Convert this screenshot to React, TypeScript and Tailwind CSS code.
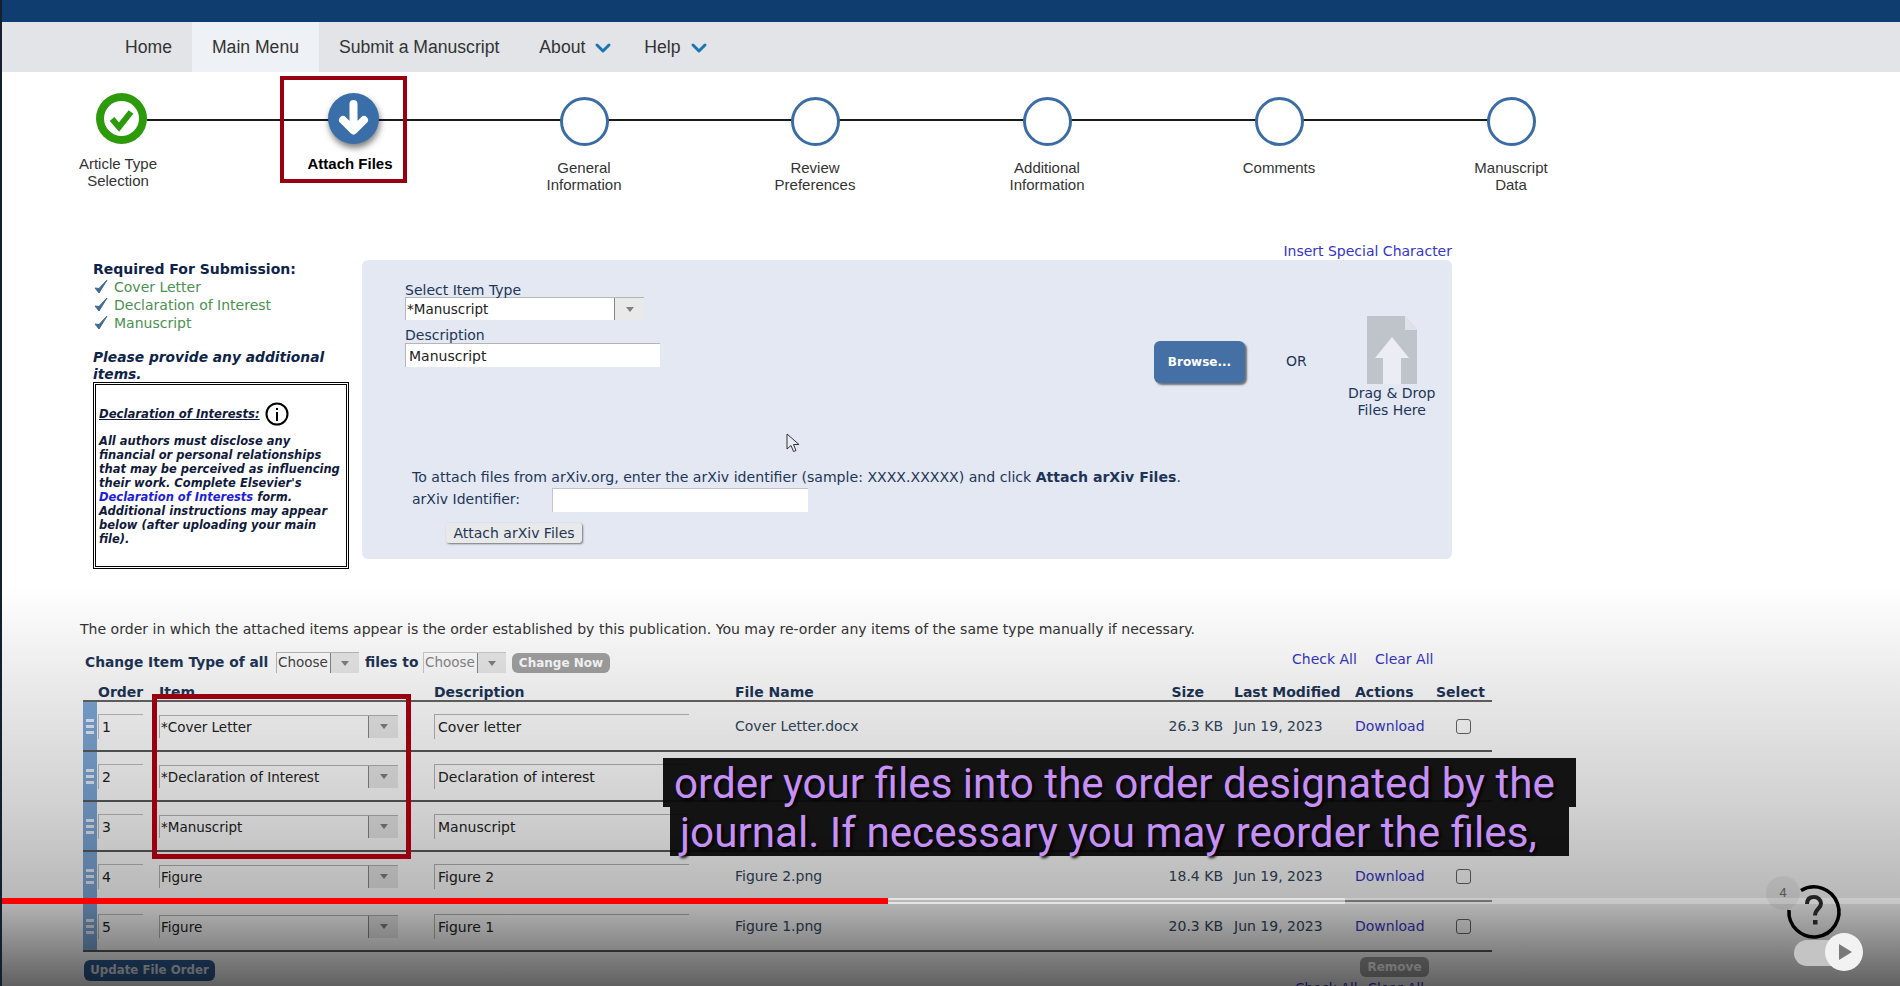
import { ChevronDown } from 'lucide-react';

type StepProps = {
    label: string[];
    state: 'done' | 'active' | 'todo';
    className: string;
    labelClass?: string;
};

// rows 2 and 3 sit behind the caption, their file columns can't be read
const rows = [
    { n: 1, item: '*Cover Letter', desc: 'Cover letter', file: 'Cover Letter.docx', size: '26.3 KB' },
    { n: 2, item: '*Declaration of Interest', desc: 'Declaration of interest', file: '', size: '' },
    { n: 3, item: '*Manuscript', desc: 'Manuscript', file: '', size: '' },
    { n: 4, item: 'Figure', desc: 'Figure 2', file: 'Figure 2.png', size: '18.4 KB' },
    { n: 5, item: 'Figure', desc: 'Figure 1', file: 'Figure 1.png', size: '20.3 KB' },
];

const gridCols = 'grid grid-cols-[15px_61px_275px_301px_405px_94px_121px_81px_56px]';

function Step({ label, state, className, labelClass }: StepProps) {
    return (
        <div className={`relative flex flex-col items-center font-['Liberation_Sans',sans-serif] text-[15px] leading-[17px] text-[#333] ${className}`}>
            {state === 'done' && (
                <svg width="51" height="51" viewBox="0 0 51 51" className="mt-[21px] mb-[11px]">
                    <circle cx="25.5" cy="25.5" r="25.5" fill="#2d9a0c" />
                    <circle cx="25.5" cy="25.5" r="17.5" fill="#fff" />
                    <path d="M16 26l7 8 12-15" fill="none" stroke="#2d9a0c" strokeWidth="6" />
                </svg>
            )}
            {state === 'active' && (
                <div className="mt-[21px] mb-[11px] h-[51px] w-[51px] rounded-full bg-[#3a6ea8] shadow-[1px_4px_6px_rgba(0,0,0,0.5)]">
                    <svg width="51" height="51" viewBox="0 0 51 51">
                        <path d="M25.5 11v24M15 27l10.500 10.500L36 27" fill="none" stroke="#fff" strokeWidth="8" strokeLinecap="round" strokeLinejoin="round" />
                    </svg>
                </div>
            )}
            {state === 'todo' && (
                <div className="mt-[25px] mb-[13px] h-[49px] w-[49px] rounded-full border-[3px] border-[#3b6da3] bg-white" />
            )}
            <div className={`text-center whitespace-nowrap ${state === 'active' ? 'font-bold text-black' : ''} ${labelClass ?? ''}`}>
                {label.map((l) => (
                    <div key={l}>{l}</div>
                ))}
            </div>
        </div>
    );
}

function Arrow({ className }: { className: string }) {
    return (
        <div className={`flex items-center justify-center bg-[#e9e9e9] border-l border-[#888] ${className}`}>
            <div className="h-0 w-0 border-x-[4px] border-t-[5px] border-x-transparent border-t-[#808080]" />
        </div>
    );
}

function Select({ text, w, arrow }: { text: string; w: string; arrow: string }) {
    return (
        <div className={`flex h-[23px] bg-white border-t border-l border-[#b5b5b5] ${w}`}>
            <div className="flex-1 pl-[1px] text-[13.5px] leading-[22px] text-[#222] whitespace-nowrap overflow-hidden">{text}</div>
            <Arrow className={arrow} />
        </div>
    );
}

function Grip() {
    return (
        <div className="flex w-[14px] flex-col items-center justify-center gap-[3px] self-stretch bg-[#7da8d8]">
            <div className="h-[3px] w-[8px] bg-[#e6edf5]" />
            <div className="h-[3px] w-[8px] bg-[#e6edf5]" />
            <div className="h-[3px] w-[8px] bg-[#e6edf5]" />
        </div>
    );
}

export default function App() {
    return (
        <div className="relative h-[986px] w-[1900px] overflow-hidden border-l-2 border-[#14202e] bg-white font-['DejaVu_Sans',sans-serif] text-[#1d3557]">
            {/* Top bar and menu */}
            <div className="h-[22px] bg-[#0f3d70]" />
            <div className="flex h-[50px] items-stretch bg-[#e2e4e8] pl-[103px] pt-[1px] font-['Liberation_Sans',sans-serif] text-[17.6px] text-[#333]">
                <div className="flex items-center px-5">Home</div>
                <div className="-mt-[1px] flex items-center bg-[#eef1f5] px-5 pt-[1px]">Main Menu</div>
                <div className="flex items-center px-5">Submit a Manuscript</div>
                <div className="flex items-center gap-[6px] pl-5 pr-[9px]">
                    About <ChevronDown className="h-[24px] w-[24px] text-[#1b75b5]" strokeWidth={3} />
                </div>
                <div className="flex items-center gap-[6px] pl-5">
                    Help <ChevronDown className="h-[24px] w-[24px] text-[#1b75b5]" strokeWidth={3} />
                </div>
            </div>

            {/* Stepper */}
            <div className="relative flex h-[170px] pl-[3px]">
                <div className="absolute left-[145px] top-[47px] h-[2px] w-[1367px] bg-[#1a1a1a]" />
                <Step state="done" label={['Article Type', 'Selection']} className="w-[232px]" labelClass="mr-[6px]" />
                <Step state="active" label={['Attach Files']} className="w-[232px]" labelClass="mr-[6px]" />
                <Step state="todo" label={['General', 'Information']} className="w-[230px]" />
                <Step state="todo" label={['Review', 'Preferences']} className="w-[232px]" />
                <Step state="todo" label={['Additional', 'Information']} className="w-[232px]" />
                <Step state="todo" label={['Comments']} className="w-[232px]" />
                <Step state="todo" label={['Manuscript', 'Data']} className="w-[232px]" />
                {/* highlight round the current step */}
                <div className="absolute left-[278px] top-[4px] h-[107px] w-[127px] border-4 border-[#99000f]" />
            </div>

            {/* Attach form */}
            <div className="flex pl-[91px]">
                <div className="mt-[19px] w-[256px]">
                    <div className="text-[14px] font-bold leading-[17px] text-[#0d2347]">Required For Submission:</div>
                    {['Cover Letter', 'Declaration of Interest', 'Manuscript'].map((t) => (
                        <div key={t} className="flex h-[18px] items-center text-[14px] text-[#4b9150]">
                            <svg width="16" height="16" viewBox="0 0 16 16" className="mr-[5px]">
                                <path d="M2 9l4 5L14 1 6 9.500z" fill="#3f6a94" stroke="#3f6a94" strokeWidth="1" />
                            </svg>
                            {t}
                        </div>
                    ))}
                    <div className="mt-[17px] text-[13.8px] font-bold italic leading-[17px] text-[#0d2347]">
                        Please provide any additional items.
                    </div>
                    <div className="-mt-[1px] h-[187px] border-[3px] border-double border-black bg-white px-[3px] text-[11.5px] font-bold italic leading-[14px] text-[#111a3a]">
                        <div className="mt-[16px] flex h-[26px] items-center gap-[5px]">
                            <span className="text-[11.65px] underline">Declaration of Interests:</span>
                            <svg width="24" height="24" viewBox="0 0 24 24">
                                <circle cx="12" cy="12" r="10.5" fill="none" stroke="#000" strokeWidth="2" />
                                <rect x="11" y="10" width="2" height="9" fill="#000" />
                                <rect x="11" y="6" width="2" height="2" fill="#000" />
                            </svg>
                        </div>
                        <div className="mt-[7px]">
                            <div>All authors must disclose any</div>
                            <div>financial or personal relationships</div>
                            <div>that may be perceived as influencing</div>
                            <div>their work. Complete Elsevier's</div>
                            <div><span className="text-[#1d1dd8]">Declaration of Interests</span> form.</div>
                            <div>Additional instructions may appear</div>
                            <div>below (after uploading your main</div>
                            <div>file).</div>
                        </div>
                    </div>
                </div>

                <div className="ml-[13px] w-[1090px]">
                    <div className="h-[18px] text-right text-[14px] leading-[18px] text-[#3535c8]">Insert Special Character</div>
                    <div className="h-[299px] rounded-[6px] bg-[#e3e8f3] pl-[43px] pt-[23px] text-[14px] text-[#1d3557]">
                        <div className="flex h-[186px] items-start">
                            <div className="w-[255px]">
                                <div className="h-[14px] leading-[15px]">Select Item Type</div>
                                <Select text="*Manuscript" w="w-[239px]" arrow="w-[30px]" />
                                <div className="mt-[7px] h-[16px] leading-[16px]">Description</div>
                                <div className="h-[24px] border-t border-l border-[#b5b5b5] bg-white pl-[3px] text-[14px] leading-[24px] text-[#222]">Manuscript</div>
                            </div>
                            <button className="ml-[494px] mt-[58px] h-[42px] w-[91px] rounded-[6px] bg-[#4570a5] text-[12px] font-bold text-white shadow-[2px_2px_2px_rgba(60,60,60,0.7)]">
                                Browse...
                            </button>
                            <div className="ml-[41px] mt-[70px] leading-[16px]">OR</div>
                            <div className="ml-[35px] mt-[33px] flex w-[100px] flex-col items-center text-[14px] leading-[17px]">
                                <svg width="50" height="68" viewBox="0 0 50 68" className="mb-[1px]">
                                    <path d="M0 0h38l12 14v54H0z" fill="#bfc3ca" />
                                    <path d="M38 0l12 14H38z" fill="#dfe2e8" />
                                    <path d="M25 21l17 21H34v26H16V42H8z" fill="#eaedf3" />
                                </svg>
                                <div className="whitespace-nowrap">Drag &amp; Drop</div>
                                <div className="whitespace-nowrap">Files Here</div>
                            </div>
                        </div>
                        <div className="ml-[7px] h-[16px] text-[14.1px] leading-[16px]">
                            To attach files from arXiv.org, enter the arXiv identifier (sample: XXXX.XXXXX) and click <b>Attach arXiv Files</b>.
                        </div>
                        <div className="ml-[7px] mt-[3px] flex items-center">
                            <div className="w-[140px] -mt-[2px]">arXiv Identifier:</div>
                            <div className="h-[24px] w-[256px] border-t border-l border-[#c5c5c5] bg-white" />
                        </div>
                        <button className="ml-[41px] mt-[11px] h-[20px] w-[136px] rounded-[3px] bg-[#e9e9e9] text-[14px] leading-[18px] text-[#1d3557] shadow-[1px_1px_2px_rgba(0,0,0,0.5)]">
                            Attach arXiv Files
                        </button>
                    </div>
                </div>
            </div>

            {/* Attached items */}
            <div className="mt-[52px] pl-[78px] text-[14.05px] leading-[16px] text-[#333]">
                The order in which the attached items appear is the order established by this publication. You may re-order any items of the same type manually if necessary.
            </div>

            <div className="mt-[15px] flex h-[21px] items-center pl-[83px] text-[13.8px]">
                <span className="w-[191px] whitespace-nowrap font-bold text-[#1d3557]">Change Item Type of all</span>
                <div className="flex h-[21px] w-[83px] border-t border-l border-[#bbb] bg-white text-[13.5px] leading-[19px] text-[#444]">
                    <div className="flex-1 pl-[1px]">Choose</div>
                    <Arrow className="w-[29px]" />
                </div>
                <span className="ml-[6px] w-[53px] whitespace-nowrap font-bold text-[#1d3557]">files to</span>
                <div className="ml-[5px] flex h-[21px] w-[83px] border-t border-l border-[#ccc] bg-white text-[13.5px] leading-[19px] text-[#888]">
                    <div className="flex-1 pl-[1px]">Choose</div>
                    <Arrow className="w-[29px]" />
                </div>
                <button className="ml-[6px] h-[20px] w-[98px] rounded-[6px] bg-[#a3a3a3] text-[12px] font-bold leading-[18px] text-white">Change Now</button>
                <span className="mb-[6px] ml-[682px] w-[83px] whitespace-nowrap text-[14px] text-[#3535c8]">Check All</span>
                <span className="mb-[6px] whitespace-nowrap text-[14px] text-[#3535c8]">Clear All</span>
            </div>

            <div className="ml-[81px] w-[1409px]">
                <div className={`${gridCols} h-[29px] items-center border-b-2 border-[#666] pt-[9px] text-[14px] font-bold text-[#1d3557]`}>
                    <div />
                    <div>Order</div>
                    <div>Item</div>
                    <div>Description</div>
                    <div>File Name</div>
                    <div className="pr-[30px] text-right">Size</div>
                    <div>Last Modified</div>
                    <div>Actions</div>
                    <div>Select</div>
                </div>
                {rows.map((r) => (
                    <div key={r.n} className={`${gridCols} h-[50px] items-center border-b-2 border-[#5a5a5a] text-[14px] text-[#33475e]`}>
                        <Grip />
                        <div className="h-[25px] w-[45px] border-t border-l border-[#c0c0c0] bg-white pl-[3px] text-[14px] leading-[24px] text-[#222]">{r.n}</div>
                        <Select text={r.item} w="w-[239px]" arrow="w-[30px]" />
                        <div className="h-[25px] w-[255px] border-t border-l border-[#b5b5b5] bg-white pl-[3px] text-[14px] leading-[24px] text-[#222]">{r.desc}</div>
                        <div>{r.file}</div>
                        <div className="pr-[11px] text-right whitespace-nowrap">{r.size}</div>
                        <div>{r.file && 'Jun 19, 2023'}</div>
                        <div className="text-[#3535c8]">{r.file && 'Download'}</div>
                        <div className="pl-[20px]">
                            {r.file && <div className="h-[15px] w-[15px] rounded-[3px] border border-[#666] bg-white" />}
                        </div>
                    </div>
                ))}
            </div>

            <div className="ml-[82px] mt-[5px] flex h-[24px] w-[1409px] items-start">
                <button className="mt-[3px] h-[21px] w-[131px] rounded-[6px] bg-[#2f5c93] text-[11.8px] font-bold leading-[19px] text-[#dfe6ef]">Update File Order</button>
                <button className="ml-[1145px] h-[20px] w-[69px] rounded-[6px] bg-[#a3a3a3] text-[12px] font-bold leading-[18px] text-white">Remove</button>
            </div>
            <div className="ml-[1293px] mt-[-1px] flex gap-[10px] text-[13.5px] leading-[16px] text-[#3535c8]">
                <span>Check All</span>
                <span>Clear All</span>
            </div>

            {/* Video player chrome over the page */}
            <div className="pointer-events-none absolute inset-x-0 bottom-0 h-[400px] bg-[linear-gradient(to_bottom,rgba(0,0,0,0)_0%,rgba(0,0,0,0.1)_30%,rgba(0,0,0,0.18)_55%,rgba(0,0,0,0.28)_78%,rgba(0,0,0,0.62)_100%)]" />

            {/* Red highlight on the item column */}
            <div className="absolute left-[150px] top-[694px] h-[165px] w-[259px] border-[5px] border-[#99000f]" />

            {/* Pointer */}
            <svg width="14" height="20" viewBox="0 0 14 20" className="absolute left-[784px] top-[433px]">
                <path d="M1 1v15l4-3.500 2.500 6 2.500-1-2.500-6H13z" fill="#e8ecf4" stroke="#333" strokeWidth="1" />
            </svg>

            {/* Captions */}
            <div className="absolute left-[661px] top-[758px] flex h-[49px] w-[913px] items-center pl-[11px] pt-[2px] bg-[rgba(8,8,8,0.95)] font-['Roboto',sans-serif] text-[42.2px] whitespace-nowrap text-[#c690f7] [text-shadow:2px_2px_3px_#000]">
                order your files into the order designated by the
            </div>
            <div className="absolute left-[668px] top-[807px] flex h-[49px] w-[899px] items-center pl-[10px] pt-[2px] bg-[rgba(8,8,8,0.95)] font-['Roboto',sans-serif] text-[42.2px] whitespace-nowrap text-[#c690f7] [text-shadow:2px_2px_3px_#000]">
                journal. If necessary you may reorder the files,
            </div>

            {/* Progress bar */}
            <div className="absolute -left-[2px] right-0 top-[898px] h-[6px] bg-white/25">
                <div className="absolute inset-y-0 left-0 w-[1345px] bg-white/50" />
                <div className="absolute inset-y-0 left-0 w-[888px] bg-[#f00]" />
            </div>

            {/* Help widget */}
            <div className="absolute left-[1764px] top-[876px] flex h-[34px] w-[34px] items-center justify-center rounded-full bg-black/5 font-['Roboto',sans-serif] text-[13px] text-[#555]">4</div>
            <svg width="60" height="60" viewBox="0 0 60 60" className="absolute left-[1782px] top-[882px]">
                <path d="M17 8.500a25 25 0 1 1-12 19.500" fill="none" stroke="#000" strokeWidth="3.500" />
                <path d="M23 22c0-5 3-7 7-7s7 3 7 6.500c0 5-6 5.500-6 12" fill="none" stroke="#222" strokeWidth="4" />
                <rect x="29" y="38" width="4.500" height="4.500" fill="#222" />
            </svg>
            <div className="absolute left-[1792px] top-[940px] h-[26px] w-[40px] rounded-l-full bg-[#c4c4c4]" />
            <div className="absolute left-[1823px] top-[933px] flex h-[38px] w-[38px] items-center justify-center rounded-full bg-[#f2f2f2]">
                <div className="ml-[2px] h-0 w-0 border-y-[8px] border-l-[13px] border-y-transparent border-l-[#7a7a7a]" />
            </div>
        </div>
    );
}
